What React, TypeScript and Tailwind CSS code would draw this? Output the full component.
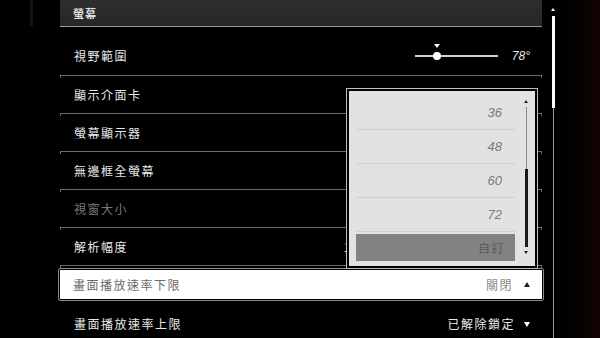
import React from 'react'

const font = { fontFamily: '"Noto Sans CJK TC", "Noto Sans", sans-serif' }

function Row({ label, dim, children, first }: { label: string; dim?: boolean; children?: React.ReactNode; first?: boolean }) {
  return (
    <div className={`relative flex items-center justify-between border-b border-[#6a6a6a] pl-[14px] pr-[12px] ${first ? 'h-[49px] pt-[10px]' : 'h-[38px]'}`}>
      <span className={`text-[12px] tracking-[1.5px] ${dim ? 'text-[#7a7a7a]' : 'text-[#e8e8e8]'}`}>{label}</span>
      {children}
      <span className="absolute -bottom-[3px] left-0 h-[3px] w-px bg-[#6a6a6a]" />
      <span className="absolute -bottom-[3px] right-0 h-[3px] w-px bg-[#6a6a6a]" />
    </div>
  )
}

export default function App() {
  return (
    <div className="relative h-[338px] w-[600px] overflow-hidden bg-black" style={font}>
      <div className="absolute inset-y-0 right-0 w-[60px] bg-gradient-to-l from-[#140404] to-black" />
      <div className="absolute left-[30px] top-0 h-[26px] w-[3px] bg-[#151515]" />

      <div className="relative ml-[60px] w-[482px]">
        <div className="flex h-[27px] items-center border-b border-[#9a9a9a] bg-gradient-to-b from-[#2e2e2e] to-[#262626] pl-[13px]">
          <span className="text-[11px] font-bold tracking-[1px] text-[#e0e0e0]">螢幕</span>
        </div>

        <Row label="視野範圍" first>
          <div className="flex items-center">
            <div className="relative h-[2px] w-[83px] bg-[#cfcfcf]">
              <span className="absolute -top-[3px] left-[18px] h-[8px] w-[8px] rounded-full bg-white" />
              <span className="absolute -top-[11px] left-[19px] h-0 w-0 border-x-[3px] border-t-[4px] border-x-transparent border-t-white" />
            </div>
            <span className="ml-[14px] text-[12px] italic text-[#e8e8e8]" style={{ fontFamily: '"Liberation Sans", sans-serif' }}>
              78°
            </span>
          </div>
        </Row>
        <Row label="顯示介面卡">
          <span className="-mt-[3px] mr-[20px] text-[12px] text-[#e8e8e8]">NVIDIA GeForce RTX 3060</span>
        </Row>
        <Row label="螢幕顯示器" />
        <Row label="無邊框全螢幕" />
        <Row label="視窗大小" dim />
        <Row label="解析幅度">
          <span className="mr-[105px] text-[12px] tracking-[1.5px] text-[#e8e8e8]">1920 x 1080</span>
        </Row>

        <div className="mt-[2px] -ml-[2px] -mr-[2px] rounded-[2px] border border-[#8a8a8a] p-px">
          <div className="flex h-[29px] items-center justify-between bg-white pl-[13px] pr-[12px]">
            <span className="text-[12px] tracking-[1.5px] text-[#6a6a6a]">畫面播放速率下限</span>
            <div className="flex items-center">
              <span className="text-[12px] tracking-[1.5px] text-[#8a8a8a]">關閉</span>
              <span className="ml-[11px] h-0 w-0 border-x-[3px] border-b-[5px] border-x-transparent border-b-[#222]" />
            </div>
          </div>
        </div>

        <div className="flex h-[46px] items-center justify-between pl-[14px] pr-[12px]">
          <span className="text-[12px] tracking-[1.5px] text-[#e8e8e8]">畫面播放速率上限</span>
          <div className="flex items-center">
            <span className="text-[12px] tracking-[1.5px] text-[#e8e8e8]">已解除鎖定</span>
            <span className="ml-[9px] h-0 w-0 border-x-[3px] border-t-[5px] border-x-transparent border-t-white" />
          </div>
        </div>
      </div>

      {/* main scrollbar */}
      <div className="absolute left-[551px] top-[8px] flex flex-col items-center">
        <span className="h-0 w-0 border-x-[2px] border-b-[3px] border-x-transparent border-b-white" />
        <span className="mt-[5px] h-[92px] w-[3px] bg-white" />
        <span className="h-[240px] w-px bg-[#9a9a9a]" />
      </div>

      {/* dropdown */}
      <div className="absolute left-[346px] top-[88px] h-[181px] w-[192px] border border-[#bdbdbd] bg-black p-[2px]">
        <div className="relative flex h-full flex-col bg-[#e2e2e2] pl-[7px] pr-[20px] pt-[5px]">
          {['36', '48', '60', '72'].map((v) => (
            <div
              key={v}
              className="flex h-[34px] items-center justify-end border-b border-[#d0d0d0] pr-[13px] text-[13px] italic text-[#7a7a7a]"
              style={{ fontFamily: '"Liberation Sans", sans-serif' }}
            >
              {v}
            </div>
          ))}
          <div className="mt-[2px] flex h-[27px] items-center justify-end bg-[#828282] pr-[10px] text-[12px] tracking-[1.5px] text-[#5a5a5a]">
            自訂
          </div>
          <div className="absolute right-[7px] top-[9px] flex flex-col items-center">
            <span className="h-0 w-0 border-x-[2px] border-b-[3px] border-x-transparent border-b-[#222]" />
            <span className="mt-[4px] h-[62px] w-px bg-[#8a8a8a]" />
            <span className="h-[78px] w-[3px] bg-[#1a1a1a]" />
            <span className="mt-[4px] h-0 w-0 border-x-[2px] border-t-[3px] border-x-transparent border-t-[#222]" />
          </div>
        </div>
      </div>
    </div>
  )
}
